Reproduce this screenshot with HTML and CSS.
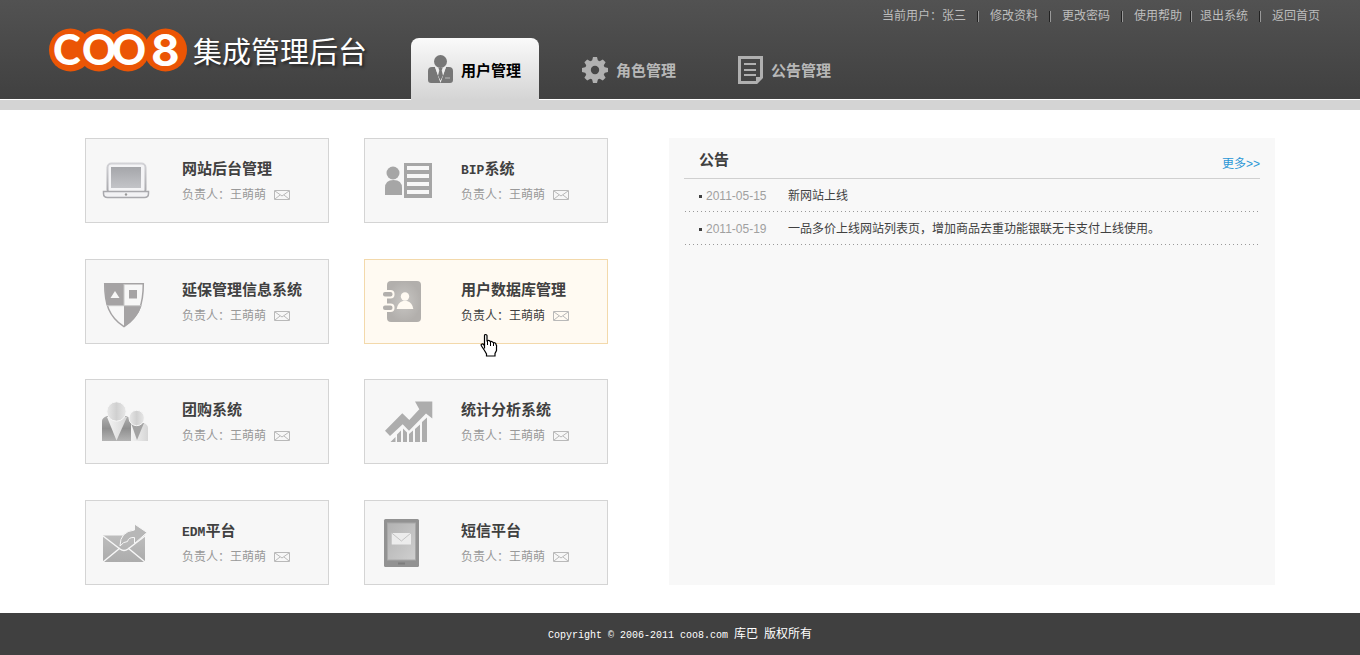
FILE: index.html
```html
<!DOCTYPE html>
<html lang="zh-CN">
<head>
<meta charset="utf-8">
<title>集成管理后台</title>
<link rel="stylesheet" href="styles.css">
</head>
<body>
<svg class="defs" width="0" height="0" aria-hidden="true">
  <defs>
    <linearGradient id="screen" x1="0" y1="0" x2="0" y2="1"><stop offset="0" stop-color="#a5a6aa"/><stop offset="1" stop-color="#c3c4c8"/></linearGradient>
    <linearGradient id="frame" x1="0" y1="0" x2="0" y2="1"><stop offset="0" stop-color="#d2d2d6"/><stop offset="1" stop-color="#a6a6aa"/></linearGradient>
    <linearGradient id="sphere"><stop offset="0" stop-color="#e8e8e8"/><stop offset=".5" stop-color="#d0d0d0"/><stop offset="1" stop-color="#e8e8e8"/></linearGradient>
    <linearGradient id="suit" x1="0" y1="0" x2="0" y2="1"><stop offset="0" stop-color="#b0b0b0"/><stop offset=".5" stop-color="#8f8f8f"/><stop offset="1" stop-color="#b4b4b4"/></linearGradient>
    <linearGradient id="shirt"><stop offset="0" stop-color="#f4f4f4"/><stop offset="1" stop-color="#d6d6d6"/></linearGradient>
    <linearGradient id="mailfill" x1="0" y1="0" x2="0" y2="1"><stop offset="0" stop-color="#bdbdbd"/><stop offset="1" stop-color="#acacac"/></linearGradient>
    <linearGradient id="glass" x1="0" y1="0" x2="1" y2="1"><stop offset="0" stop-color="#b2b2b2"/><stop offset="1" stop-color="#cfcfcf"/></linearGradient>
    <radialGradient id="book"><stop offset="0" stop-color="#c8c6c3"/><stop offset="1" stop-color="#b2afac"/></radialGradient>
    <symbol id="mail" viewBox="0 0 16 10">
      <path d="M.5.5h15v9H.5zM1 1l7 5 7-5M1 9l5-4M15 9l-5-4" fill="none" stroke="#b9b9b9"/>
    </symbol>
  </defs>
</svg>

<header class="header">
  <h1 class="brand">
    <svg class="logo" viewBox="0 0 138 44" width="138" height="44" role="img" aria-label="COO8">
      <g fill="#eb5505"><circle cx="21.500" cy="22" r="21.500"/><circle cx="50" cy="22" r="21.500"/><circle cx="79" cy="22" r="21.500"/><circle cx="116.500" cy="22" r="21.500"/></g>
      <g class="logo-text"><text x="4 33 63" y="37">COO</text><text class="logo-eight" x="102" y="38">8</text></g>
    </svg>
    <span class="brand-name">集成管理后台</span>
  </h1>
  <nav class="tabs">
    <a class="tab tab-active" href="#">
      <svg width="26" height="30" viewBox="0 0 26 30"><circle cx="13.500" cy="7.500" r="6.500" fill="#777"/><path d="M8 13H5q-4 0-4 4v9q0 3 3 3h19q3 0 3-3v-9q0-4-4-4h-3l-5.500 15z" fill="#777"/><path d="M8 13l5.500 16L19 13h-2l-1 2-2.500 12L11 15l-1-2z" fill="#eee"/><path d="M11.500 14h4l-.8 2.500 1.300 5-2.500 5-2.500-5 1.300-5z" fill="#777"/><path d="M18 24h5" stroke="#bbb"/></svg>
      <span>用户管理</span>
    </a>
    <a class="tab" href="#">
      <svg width="26" height="30" viewBox="0 0 26 30"><g transform="translate(13 16)"><g fill="#b0b0b0"><circle r="10"/><g id="teeth"><path d="M-3-9l1-4h4l1 4zM-3 9l1 4h4l1-4zM-9-3l-4 1v4l4 1zM9-3l4 1v4l-4 1z"/></g><use href="#teeth" transform="rotate(45)"/></g><circle r="4.200" fill="#464646"/></g></svg>
      <span>角色管理</span>
    </a>
    <a class="tab" href="#">
      <svg width="26" height="30" viewBox="0 0 26 30"><path d="M2.500 3.500h22v20l-5 5h-17z" fill="none" stroke="#b0b0b0" stroke-width="3"/><path d="M19 29v-6h6z" fill="#b0b0b0"/><path d="M7 10h12M7 16h12M7 21h12" stroke="#b0b0b0" stroke-width="2"/></svg>
      <span>公告管理</span>
    </a>
  </nav>
  <ul class="user-links">
    <li>当前用户：张三</li>
    <li><a href="#">修改资料</a></li>
    <li><a href="#">更改密码</a></li>
    <li><a href="#">使用帮助</a></li>
    <li class="tight"><a href="#">退出系统</a></li>
    <li><a href="#">返回首页</a></li>
  </ul>
</header>

<main class="main">
  <section class="cards">
    <article class="card">
      <svg class="card-icon" viewBox="0 0 52 53"><rect x="5.500" y="9.500" width="38" height="30" rx="4" fill="#f4f4f6" stroke="url(#frame)" stroke-width="2"/><rect x="9" y="13" width="30" height="21" fill="url(#screen)"/><path d="M1.500 37.500h45v2q0 4-4 4h-37q-4 0-4-4z" fill="#f2f2f4" stroke="#a9a9ad" stroke-width="1.500"/><circle cx="24" cy="40.500" r="1.200" fill="#999"/></svg>
      <div class="card-body"><h2><a href="#">网站后台管理</a></h2><p>负责人：王萌萌<a class="mail" href="#" aria-label="发邮件"><svg width="16" height="10"><use href="#mail"/></svg></a></p></div>
    </article>
    <article class="card">
      <svg class="card-icon" viewBox="0 0 52 53"><g fill="#a6a6a6"><circle cx="12" cy="19" r="6.500"/><path d="M4 41v-7q0-8 8.500-8t8.500 8v7z"/><path d="M23 9h28v35H23z"/></g><path d="M26 12h22v4H26zM26 20h22v4H26zM26 28h22v4H26zM26 36h22v4H26z" fill="#f7f7f7"/></svg>
      <div class="card-body"><h2><a href="#"><span class="latin">BIP</span>系统</a></h2><p>负责人：王萌萌<a class="mail" href="#" aria-label="发邮件"><svg width="16" height="10"><use href="#mail"/></svg></a></p></div>
    </article>
    <article class="card">
      <svg class="card-icon" viewBox="0 0 52 53"><path d="M2.700 8.700h38.600c0 20-4 33-19.300 43C6.700 41.700 2.700 28.700 2.700 8.700z" fill="#f7f7f7" stroke="#a5a3a4" stroke-width="1.500"/><path d="M3 9h19v21.700H5Q3 22 3 9zM22 30.700h17.500Q36 43 22 52z" fill="#a5a3a4"/><path d="M13 16l4.500 7h-9z" fill="#f7f7f7"/><path d="M27 15h8v8.500h-8z" fill="#a5a3a4"/><path d="M22 30.700h18M22 9v22M5 30.700h17" stroke="#c8c8c8"/></svg>
      <div class="card-body"><h2><a href="#">延保管理信息系统</a></h2><p>负责人：王萌萌<a class="mail" href="#" aria-label="发邮件"><svg width="16" height="10"><use href="#mail"/></svg></a></p></div>
    </article>
    <article class="card card-hover">
      <svg class="card-icon" viewBox="0 0 52 53"><rect x="6" y="6" width="34" height="41" rx="4" fill="url(#book)"/><g fill="#fffaf2"><rect x="2" y="15" width="11.500" height="8.500" rx="4"/><rect x="2" y="28.500" width="11.500" height="8.500" rx="4"/></g><g fill="#b2afac"><rect x="2" y="17" width="9.500" height="4.500" rx="2"/><rect x="2" y="30.500" width="9.500" height="4.500" rx="2"/></g><circle cx="24" cy="21.500" r="4.200" fill="#fffaf2"/><path d="M15.700 34q1-6.500 6.300-8h4q5.300 1.500 6.300 8z" fill="#fffaf2"/></svg>
      <div class="card-body"><h2><a href="#">用户数据库管理</a></h2><p>负责人：王萌萌<a class="mail" href="#" aria-label="发邮件"><svg width="16" height="10"><use href="#mail"/></svg></a></p></div>
      <svg class="cursor" width="18" height="23" viewBox="0 0 18 23" aria-hidden="true"><path d="M4.500 14.500V1.500q0-1 1.200-1t1.300 1v6q.5-1.500 2-1t1 1.500q1-1 2.200-.3t.8 1.300q1-.8 2.200 0t.8 1.500q1 1 .5 3v3l-1.500 3v2.500h-8.500v-2l-2-3.500-3-4.500q-1-1.500.5-2t2.500 2z" fill="#fff" stroke="#000" stroke-width="1.200"/><path d="M7.500 7v4M10.500 8v4M13.500 9v3" stroke="#000"/></svg>
    </article>
    <article class="card">
      <svg class="card-icon" viewBox="0 0 52 53"><path d="M0 46V26q0-3 5-5h19q5 2 5 5v20z" fill="url(#suit)"/><path d="M5 22h20L14.500 45.500z" fill="url(#shirt)"/><circle cx="14.500" cy="16.500" r="9.700" fill="url(#sphere)" stroke="#f7f7f7"/><path d="M29 46V28h13q4 2 4 5v13z" fill="url(#shirt)"/><path d="M29 28h13l-7 17z" fill="#a3a3a3"/><circle cx="34.700" cy="23" r="7.700" fill="url(#sphere)" stroke="#f7f7f7"/></svg>
      <div class="card-body"><h2><a href="#">团购系统</a></h2><p>负责人：王萌萌<a class="mail" href="#" aria-label="发邮件"><svg width="16" height="10"><use href="#mail"/></svg></a></p></div>
    </article>
    <article class="card">
      <svg class="card-icon" viewBox="0 0 52 53"><g fill="#adadad"><path d="M4 35.700l17.300-17.400 7 6.700 10-10.700L34 6.500h17.300v17L45 18.500 28 35.700l-6.300-6.400L9 41z"/><path d="M9.500 47l5-5V47zM16 47v-7.500l4-4V47zM22 47V33.500l4 4V47zM28 47v-8l4-3.500V47zM34 47V34l5-4.500V47zM41 47V27l5-4.500V47z"/></g></svg>
      <div class="card-body"><h2><a href="#">统计分析系统</a></h2><p>负责人：王萌萌<a class="mail" href="#" aria-label="发邮件"><svg width="16" height="10"><use href="#mail"/></svg></a></p></div>
    </article>
    <article class="card">
      <svg class="card-icon" viewBox="0 0 52 53"><path d="M1 19.500h42V46H1z" fill="url(#mailfill)"/><path d="M1 20l17 13q4 3 8 0L43 20M1 46l17-14M43 46L26 32" fill="none" stroke="#f7f7f7" stroke-width="1.500"/><path d="M18 30q0-14.500 14.500-16V8l12.500 8.500-12.500 11V21.500q-6-.5-7 4-4 0-7.500 4.500z" fill="#b7b7b7" stroke="#f7f7f7"/></svg>
      <div class="card-body"><h2><a href="#"><span class="latin">EDM</span>平台</a></h2><p>负责人：王萌萌<a class="mail" href="#" aria-label="发邮件"><svg width="16" height="10"><use href="#mail"/></svg></a></p></div>
    </article>
    <article class="card">
      <svg class="card-icon" viewBox="0 0 52 53"><rect x="3" y="3" width="35" height="48" rx="1.500" fill="#929292"/><rect x="6.500" y="7" width="28" height="37" fill="url(#glass)" stroke="#a8a8a8"/><path d="M10.700 17H30v11.500H10.700z" fill="#ececec"/><path d="M10.700 17l9.700 8L30 17" fill="none" stroke="#c4c4c4"/><path d="M17 47.500h7" stroke="#7d7d7d" stroke-width="2"/></svg>
      <div class="card-body"><h2><a href="#">短信平台</a></h2><p>负责人：王萌萌<a class="mail" href="#" aria-label="发邮件"><svg width="16" height="10"><use href="#mail"/></svg></a></p></div>
    </article>
  </section>

  <section class="notice">
    <div class="notice-head"><h2>公告</h2><a href="#">更多&gt;&gt;</a></div>
    <ul class="notice-list">
      <li><time datetime="2011-05-15">2011-05-15</time><a href="#">新网站上线</a></li>
      <li><time datetime="2011-05-19">2011-05-19</time><a href="#">一品多价上线网站列表页，增加商品去重功能银联无卡支付上线使用。</a></li>
    </ul>
  </section>
</main>

<footer class="footer"><span class="mono">Copyright © 2006-2011 coo8.com </span>库巴<span class="mono"> </span>版权所有</footer>
</body>
</html>
```

FILE: styles.css
```css
*,
*::before {
  box-sizing: border-box;
}

body {
  margin: 0;
  min-height: 100vh;
  display: flex;
  flex-direction: column;
  background: #fff;
  color: #404040;
  font: 12px/16px "Liberation Sans", "Noto Sans CJK SC", sans-serif;
}

h1, h2, p, ul {
  margin: 0;
  padding: 0;
  font-weight: normal;
}

ul {
  list-style: none;
}

a {
  color: inherit;
  text-decoration: none;
}

svg {
  display: block;
  flex: none;
  overflow: visible;
}

.defs {
  position: absolute;
}

/* Header */
.header {
  display: flex;
  align-items: flex-start;
  min-height: 110px;
  padding: 0 40px 0 49px;
  border-bottom: 10px solid #d4d4d4;
  background:
    linear-gradient(#fff, #fff) bottom / 100% 1px no-repeat,
    linear-gradient(#525252, #404040);
}

.brand {
  flex: none;
  display: flex;
  align-items: flex-start;
  gap: 6px;
  width: 362px;
  padding-top: 28px;
}

.logo-text {
  fill: #fff;
  font: 900 42px Lato, sans-serif;
}

.logo-eight {
  font: 700 44px Inter, sans-serif;
}

.brand-name {
  color: #fff;
  font-size: 29px;
  line-height: 50px;
  white-space: nowrap;
  text-shadow: 2px 2px 3px rgba(0, 0, 0, .5);
}

.tabs {
  flex: none;
  display: flex;
  gap: 27px;
  padding-top: 38px;
}

.tab {
  display: flex;
  align-items: center;
  gap: 8px;
  width: 128px;
  height: 62px;
  padding-left: 16px;
  border-radius: 8px 8px 0 0;
  color: #b8b8b8;
  font-size: 15px;
  font-weight: bold;
  line-height: 20px;
}

.tab span {
  padding-top: 4px;
}

.tab-active {
  background: linear-gradient(#fafafa, #d4d4d4);
  color: #000;
}

.user-links {
  display: flex;
  margin-left: auto;
  padding-top: 8px;
  color: #bdbdbd;
  white-space: nowrap;
}

.user-links li {
  display: flex;
  align-items: center;
}

.user-links li + li::before {
  content: "";
  width: 2px;
  height: 11px;
  margin: 0 11px;
  border-left: 1px solid #222;
  background: #999;
}

.user-links .tight::before {
  margin: 0 8px;
}

/* Content */
.main {
  flex: 1;
  display: flex;
  gap: 61px;
  padding: 28px 85px;
}

.cards {
  flex: none;
  display: grid;
  grid-template-columns: 244px 244px;
  gap: 35px;
  align-content: space-between;
}

.card {
  position: relative;
  display: flex;
  gap: 28px;
  min-height: 85px;
  padding: 15px 16px;
  border: 1px solid #d4d4d4;
  background: #f7f7f7;
}

.card-icon {
  width: 52px;
  height: 53px;
}

.card-body {
  padding-top: 5px;
}

.card h2 {
  font-size: 15px;
  font-weight: bold;
  line-height: 20px;
  white-space: nowrap;
}

.latin {
  font-family: "Liberation Mono", monospace;
  font-size: 13px;
  line-height: 1px;
}

.card p {
  display: flex;
  align-items: center;
  gap: 8px;
  margin-top: 8px;
  color: #999;
  white-space: nowrap;
}

.card-hover {
  border-color: #f3d9ab;
  background: #fffaf2;
}

.card-hover p {
  color: #404040;
}

.cursor {
  position: absolute;
  left: 115px;
  top: 74px;
}

/* Notice panel */
.notice {
  flex: 1;
  min-width: 0;
  padding: 0 15px;
  background: #f8f8f8;
}

.notice-head {
  display: flex;
  justify-content: space-between;
  align-items: flex-end;
  min-height: 41px;
  padding: 0 0 6px 15px;
  border-bottom: 1px solid #d0d0d0;
}

.notice-head h2 {
  font-size: 15px;
  font-weight: bold;
  line-height: 24px;
}

.notice-head a {
  color: #2b97d6;
}

.notice-list li {
  display: flex;
  align-items: center;
  min-height: 33px;
  padding: 1px 0 0 15px;
  background: repeating-linear-gradient(90deg, transparent 0 1px, #999 1px 2px, transparent 2px 4px) bottom / 100% 1px no-repeat;
}

.notice-list li::before {
  content: "";
  width: 3px;
  height: 3px;
  margin-right: 4px;
  background: #404040;
}

.notice-list time {
  flex: none;
  width: 82px;
  color: #a0a0a0;
}

/* Footer */
.footer {
  min-height: 42px;
  padding: 13px 20px;
  background: #404040;
  color: #fff;
  text-align: center;
}

.mono {
  font-family: "Liberation Mono", monospace;
  font-size: 10px;
  line-height: 1px;
  white-space: pre-wrap;
}
```
